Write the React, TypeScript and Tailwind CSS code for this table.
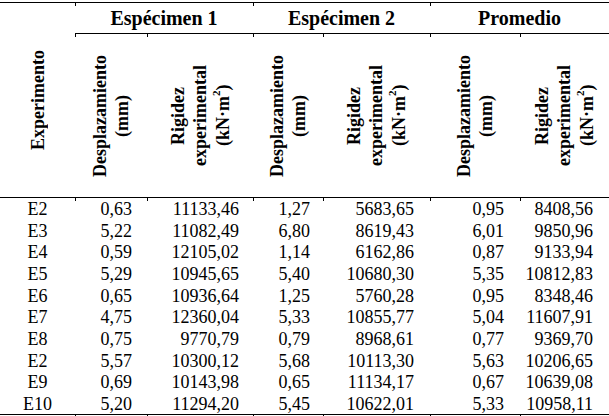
const rows = [
  ["E2", "0,63", "11133,46", "1,27", "5683,65", "0,95", "8408,56"],
  ["E3", "5,22", "11082,49", "6,80", "8619,43", "6,01", "9850,96"],
  ["E4", "0,59", "12105,02", "1,14", "6162,86", "0,87", "9133,94"],
  ["E5", "5,29", "10945,65", "5,40", "10680,30", "5,35", "10812,83"],
  ["E6", "0,65", "10936,64", "1,25", "5760,28", "0,95", "8348,46"],
  ["E7", "4,75", "12360,04", "5,33", "10855,77", "5,04", "11607,91"],
  ["E8", "0,75", "9770,79", "0,79", "8968,61", "0,77", "9369,70"],
  ["E2", "5,57", "10300,12", "5,68", "10113,30", "5,63", "10206,65"],
  ["E9", "0,69", "10143,98", "0,65", "11134,17", "0,67", "10639,08"],
  ["E10", "5,20", "11294,20", "5,45", "10622,01", "5,33", "10958,11"],
];

// alignment per column
const cellPad = [
  "justify-center",
  "justify-end pr-[15px]",
  "justify-end pr-[14px]",
  "justify-end pr-[13px]",
  "justify-end pr-[16px]",
  "justify-end pr-[16px]",
  "justify-end pr-[16px]",
];

function Tick({ bottom }: { bottom?: boolean }) {
  return (
    <span
      className={
        bottom
          ? "absolute left-0 -bottom-[4px] h-[3px] w-px bg-black"
          : "absolute left-0 top-0 h-[3px] w-px bg-black"
      }
    />
  );
}

function Rotated({ lines }: { lines: React.ReactNode[] }) {
  return (
    <div className="flex h-full items-center justify-center">
      <div className="rotate-180 text-center text-[18px] font-bold leading-[22px] [writing-mode:vertical-rl]">
        {lines.map((l, i) => (
          <div key={i}>{l}</div>
        ))}
      </div>
    </div>
  );
}

const kNm = (
  <span>
    (kN·m<span className="align-super text-[11px] leading-none">2</span>)
  </span>
);

export default function App() {
  return (
    <div className="h-[416px] w-[609px] overflow-hidden bg-white pt-[2px] font-[family-name:Liberation_Serif,Times_New_Roman,serif] text-black">
      <div className="grid grid-cols-[75px_72px_106px_70px_107px_90px_89px] grid-rows-[31px_164px_repeat(10,21.7px)] border-t border-black">
        <div className="row-span-2 border-b border-black">
          <Rotated lines={["Experimento"]} />
        </div>
        {["Espécimen 1", "Espécimen 2", "Promedio"].map((g) => (
          <div
            key={g}
            className="relative col-span-2 flex items-center justify-center border-b border-black text-[20px] font-bold"
          >
            <Tick />
            {g}
          </div>
        ))}
        {[0, 1, 2].map((g) => [
          <div key={g + "d"} className="relative border-b border-black">
            <Tick />
            <Rotated lines={["Desplazamiento", "(mm)"]} />
          </div>,
          <div key={g + "r"} className="relative border-b border-black">
            <Tick />
            <Rotated lines={["Rigidez", "experimental", kNm]} />
          </div>,
        ])}
        {rows.map((r, ri) =>
          r.map((v, ci) => (
            <div
              key={ri + "-" + ci}
              className={
                "relative flex items-center text-[18px] leading-none " +
                cellPad[ci] +
                (ri === rows.length - 1 ? " border-b border-black" : "")
              }
            >
              {ri === 0 && ci > 0 && <Tick />}
              {ri === rows.length - 1 && ci > 0 && <Tick bottom />}
              {v}
            </div>
          ))
        )}
      </div>
    </div>
  );
}
